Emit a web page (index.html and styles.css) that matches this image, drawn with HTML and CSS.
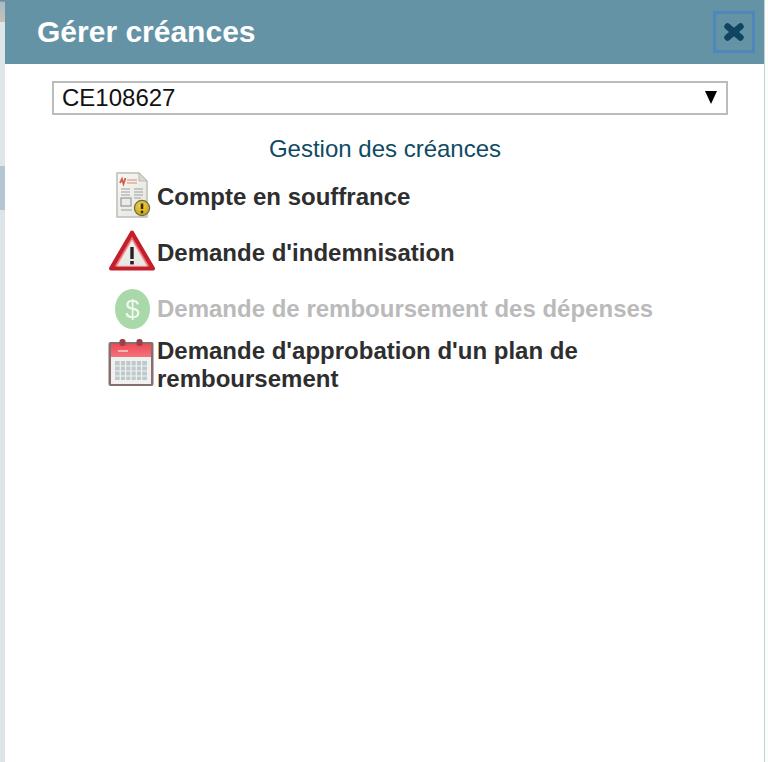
FILE: index.html
```html
<!DOCTYPE html>
<html lang="fr">
<head>
<meta charset="utf-8">
<title>Gérer créances</title>
<link rel="stylesheet" href="styles.css">
</head>
<body>
<div class="backdrop">
  <div class="side side-left"><span class="band b0"></span><span class="band b1"></span><span class="band b2"></span></div>
  <main class="dialog">
    <header class="head">
      <h1 class="title">Gérer créances</h1>
      <button class="close" aria-label="Fermer">
        <svg width="24" height="22" viewBox="0 0 24 22"><path d="M5.5 5.5 L18.5 16.5 M18.5 5.5 L5.5 16.5" stroke="#0f4560" stroke-width="6.4" stroke-linecap="round"/></svg>
      </button>
    </header>
    <div class="body">
      <div class="select"><span>CE108627</span><span class="arrow"></span></div>
      <h2 class="sub">Gestion des créances</h2>
      <ul class="list">
        <li class="item">
          <span class="ico">
            <svg width="48" height="48" viewBox="0 0 48 48">
              <defs>
                <linearGradient id="paper" x1="0" y1="0" x2="1" y2="1"><stop offset="0" stop-color="#f8f7f3"/><stop offset="1" stop-color="#e4e4df"/></linearGradient>
                <radialGradient id="gold" cx="0.45" cy="0.35" r="0.7"><stop offset="0" stop-color="#f5d84a"/><stop offset="1" stop-color="#c39a14"/></radialGradient>
              </defs>
              <path d="M9 2 H31 L39 10 V46 H9 Z" fill="url(#paper)" stroke="#bdbdb7" stroke-width="1.5"/>
              <path d="M31 2 V10 H39 Z" fill="#d8d8d2" stroke="#bdbdb7"/>
              <path d="M12 12 l2 -4 l1.5 5 l2 -6" fill="none" stroke="#d0604c" stroke-width="1.8"/>
              <path d="M19 9 H29 M19 12 H29" stroke="#e2aa9c" stroke-width="1.6"/>
              <path d="M13 18 H22 M13 21 H22 M13 24 H22 M26 18 H35 M26 21 H35 M26 24 H35 M26 27 H33" stroke="#9aa0a6" stroke-width="1.2"/>
              <rect x="13" y="27" width="10" height="8" fill="#ebebe7" stroke="#98989a" stroke-width="1.2"/>
              <path d="M13 39 H24" stroke="#aaa" stroke-width="1.2"/>
              <circle cx="34" cy="37" r="7.6" fill="url(#gold)" stroke="#6a6a50" stroke-width="1.2"/>
              <path d="M34 32.5 V38" stroke="#3a2c00" stroke-width="2.6"/>
              <circle cx="34" cy="41" r="1.4" fill="#3a2c00"/>
            </svg>
          </span>
          <span class="lbl">Compte en souffrance</span>
        </li>
        <li class="item">
          <span class="ico">
            <svg width="48" height="48" viewBox="0 0 48 48">
              <defs>
                <linearGradient id="inner" x1="0" y1="0" x2="0" y2="1"><stop offset="0" stop-color="#f4f0ea"/><stop offset="1" stop-color="#e6e8e6"/></linearGradient>
              </defs>
              <path d="M24 5.5 L45 41.5 H3 Z" fill="#ea6a72" stroke="#c21f2a" stroke-width="4" stroke-linejoin="round"/>
              <path d="M24 13 L39 39 H9 Z" fill="url(#inner)" stroke="#f4b8b8" stroke-width="1" stroke-linejoin="round"/>
              <path d="M24 20 V32" stroke="#222" stroke-width="3.4"/>
              <rect x="22.2" y="34" width="3.6" height="3.4" fill="#222"/>
            </svg>
          </span>
          <span class="lbl">Demande d'indemnisation</span>
        </li>
        <li class="item short off">
          <span class="ico">
            <svg width="48" height="48" viewBox="0 0 48 48">
              <ellipse cx="24.5" cy="26" rx="17.5" ry="20" fill="#a9d9a9"/>
              <text x="24.5" y="35" class="dollar" text-anchor="middle">$</text>
            </svg>
          </span>
          <span class="lbl">Demande de remboursement des dépenses</span>
        </li>
        <li class="item last">
          <span class="ico">
            <svg width="48" height="50" viewBox="0 0 48 50">
              <defs>
                <linearGradient id="red" x1="0" y1="0" x2="0" y2="1"><stop offset="0" stop-color="#ee4a55"/><stop offset="1" stop-color="#f2747e"/></linearGradient>
              </defs>
              <rect x="0.5" y="5" width="45" height="44" rx="2" fill="#85706f"/>
              <rect x="3" y="7" width="40" height="40" fill="#f2f1ef"/>
              <rect x="3" y="7" width="40" height="13" fill="url(#red)"/>
              <rect x="11.5" y="2" width="6" height="7" rx="2.5" fill="#9a4048"/>
              <rect x="28.5" y="2" width="6" height="7" rx="2.5" fill="#9a4048"/>
              <path d="M10 14 H20" stroke="#f8d0d0" stroke-width="1.5"/>
              <rect x="7" y="24" width="32" height="19" fill="#bccacd"/>
              <path d="M12.3 24 V43 M17.6 24 V43 M23 24 V43 M28.3 24 V43 M33.6 24 V43 M7 29 H39 M7 34 H39 M7 39 H39" stroke="#f2f1ef" stroke-width="1.2"/>
            </svg>
          </span>
          <span class="lbl">Demande d'approbation d'un plan de remboursement</span>
        </li>
      </ul>
    </div>
  </main>
  <div class="side side-right"></div>
</div>
</body>
</html>
```
FILE: styles.css
```css
* { box-sizing: border-box; }
html, body { margin: 0; height: 100%; overflow: hidden; }
body { font-family: "Liberation Sans", Arial, sans-serif; background: #dfe5e9; }
.backdrop { display: flex; height: 762px; width: 768px; }
.side { position: relative; }
.side-left { width: 5px; display: flex; flex-direction: column; background: #dde4e8; }
.side-right { width: 4px; background: #fbfcfc; border-left: 1px solid #c8d0d6; }
.band { display: block; }
.b0 { height: 22px; background: linear-gradient(#5f7f94 0, #a9bcc6 12%, #c4bfb4 85%, #c9c2b6 100%); }
.b1 { height: 144px; background: #dfe6ea; }
.b2 { height: 44px; background: #b4c6d0; }
.dialog { width: 759px; background: #fff; display: flex; flex-direction: column; }
.head { height: 64px; background: #6593a6; display: flex; align-items: center; justify-content: space-between; padding: 0 9px 0 32px; }
.title { margin: 0; font-size: 30px; font-weight: 700; color: #fff; line-height: 64px; }
.close { width: 42px; height: 42px; border: 3px solid #4f87bb; background: transparent; padding: 0; display: flex; align-items: center; justify-content: center; }
.body { padding: 17px 36px 0 47px; }
.select { height: 34px; border: 2px solid #bcbcbc; background: #fff; display: flex; align-items: center; justify-content: space-between; padding: 0 9px 0 8px; font-size: 24px; color: #111; }
.arrow { width: 0; height: 0; border-left: 6.5px solid transparent; border-right: 6.5px solid transparent; border-top: 13px solid #000; margin-bottom: 1px; }
.sub { margin: 21px 0 0; padding-right: 10px; font-size: 24px; font-weight: 400; line-height: 26px; color: #0f4a64; text-align: center; }
.list { list-style: none; margin: 9px 0 0; padding: 0 0 0 56px; }
.item { display: flex; align-items: flex-start; height: 56px; font-size: 24px; font-weight: 700; line-height: 28px; color: #2e2e2e; }
.ico { flex: none; width: 49px; }
.ico svg { display: block; filter: blur(0.4px); overflow: visible; }
.lbl { margin-top: 12px; }
.short { height: 54px; }
.last { height: auto; }
.last .lbl { margin-top: 0; }
.off { color: #bababa; }
.dollar { font-family: "Liberation Sans", Arial, sans-serif; font-size: 26px; font-weight: 400; fill: #f2f8f2; }
```
